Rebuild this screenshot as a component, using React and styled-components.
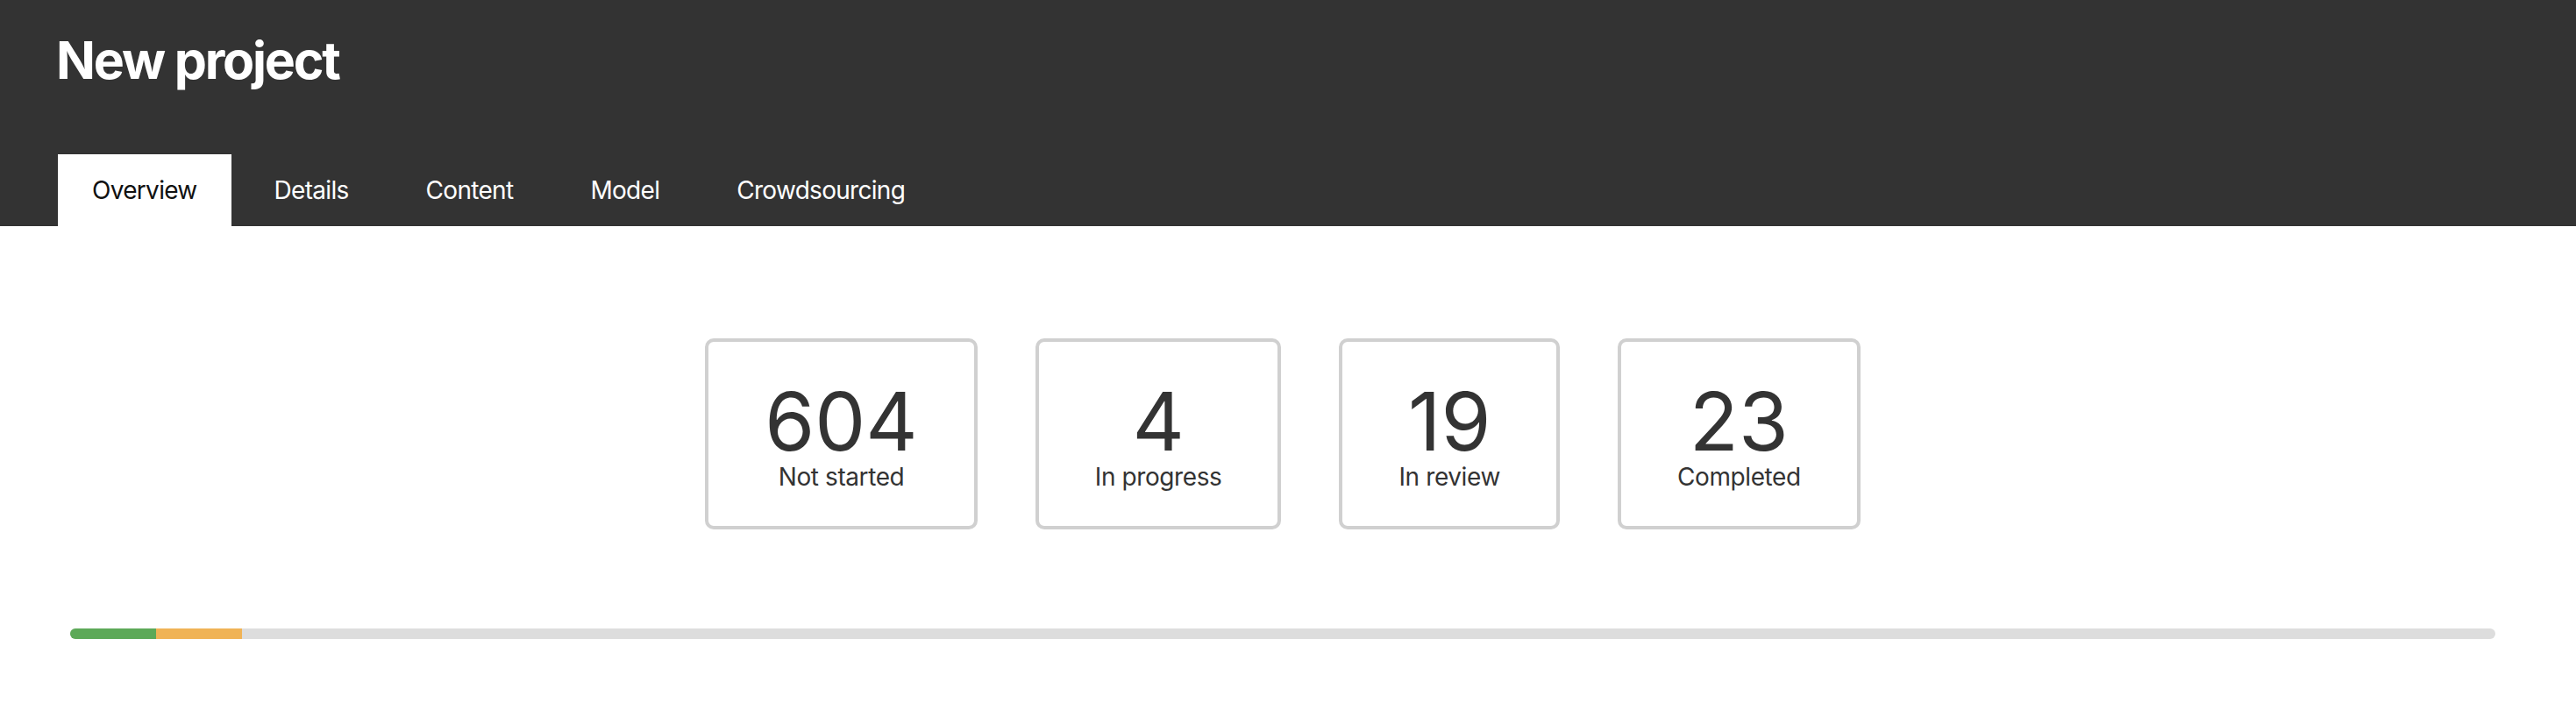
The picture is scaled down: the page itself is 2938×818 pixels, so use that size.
import React from "react";
import styled, { createGlobalStyle } from "styled-components";

const GlobalStyle = createGlobalStyle`
  body {
    margin: 0;
    background: #fff;
    font-family: Inter, "Noto Sans", "Liberation Sans", sans-serif;
    color: #333;
  }
`;

const stats = [
  { label: "Not started", value: 604 },
  { label: "In progress", value: 4 },
  { label: "In review", value: 19 },
  { label: "Completed", value: 23 },
];

const tabs = ["Overview", "Details", "Content", "Model", "Crowdsourcing"];

const App = () => {
  const total = stats.reduce((sum, s) => sum + s.value, 0);
  const done = stats[3].value;
  const active = stats[1].value + stats[2].value;

  return (
    <>
      <GlobalStyle />
      <Header>
        <Title>New project</Title>
        <TabList>
          {tabs.map((tab, i) => (
            <Tab key={tab} $active={i === 0}>
              {tab}
            </Tab>
          ))}
        </TabList>
      </Header>
      <Main>
        <StatRow>
          {stats.map((s) => (
            <StatCard key={s.label}>
              <StatValue>{s.value}</StatValue>
              <StatLabel>{s.label}</StatLabel>
            </StatCard>
          ))}
        </StatRow>
        <Progress>
          <Segment $color="#5da958" style={{ width: `${(done / total) * 100}%` }} />
          <Segment $color="#f0b356" style={{ width: `${(active / total) * 100}%` }} />
        </Progress>
      </Main>
    </>
  );
};

const Header = styled.header`
  background: #333333;
  padding: 33px 0 0 64px;
  display: flex;
  flex-direction: column;
`;

const Title = styled.h1`
  margin: 0;
  color: #fff;
  font-size: 59px;
  line-height: 72px;
  font-weight: 700;
  letter-spacing: -2.2px;
`;

const TabList = styled.nav`
  display: flex;
  gap: 10px;
  margin: 71px 0 0 2px;
`;

const Tab = styled.div`
  height: 82px;
  padding: 0 39px;
  display: flex;
  align-items: center;
  font-size: 28px;
  font-weight: 400;
  letter-spacing: -0.7px;
  background: ${(p) => (p.$active ? "#fff" : "transparent")};
  color: ${(p) => (p.$active ? "#111" : "#fff")};
`;

const Main = styled.main`
  padding: 128px 92px 0 80px;
  display: flex;
  flex-direction: column;
  gap: 113px;
`;

const StatRow = styled.div`
  display: flex;
  justify-content: center;
  gap: 66px;
`;

const StatCard = styled.div`
  border: 4px solid #d0d0d0;
  border-radius: 10px;
  padding: 45px 64px 39px;
  display: flex;
  flex-direction: column;
  align-items: center;
`;

const StatValue = styled.div`
  font-size: 92px;
  line-height: 92px;
  font-weight: 400;
  color: #333;
`;

const StatLabel = styled.div`
  font-size: 28px;
  line-height: 34px;
  letter-spacing: -0.4px;
  color: #333;
`;

const Progress = styled.div`
  height: 12px;
  border-radius: 6px;
  background: #dddddd;
  overflow: hidden;
  display: flex;
`;

const Segment = styled.div`
  height: 100%;
  background: ${(p) => p.$color};
`;

export default App;
